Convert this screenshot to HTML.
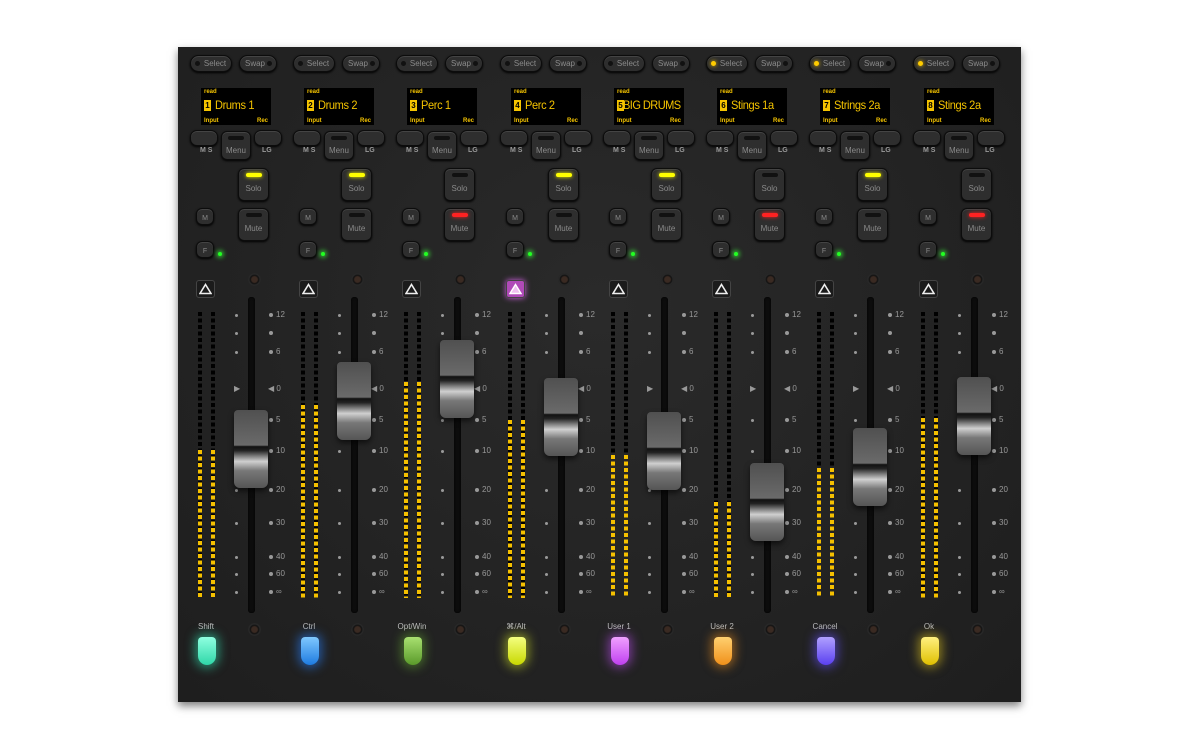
<!DOCTYPE html>
<html><head><meta charset="utf-8"><style>
*{margin:0;padding:0;box-sizing:border-box}
body{width:1200px;height:750px;background:#fff;position:relative;overflow:hidden;font-family:"Liberation Sans",sans-serif}
#panel{position:absolute;left:178px;top:47px;width:843px;height:655px;background:radial-gradient(ellipse at 50% 40%,#2a2a2a,#1e1e1e);box-shadow:0 4px 8px rgba(0,0,0,.5)}
.ch{position:absolute;top:0;width:103px;height:750px}
.ch>*{position:absolute}
.btn{background:#2e2e2e;border:1px solid #0c0c0c;border-radius:6px;box-shadow:inset 0 1px 0 #444,0 1px 2px #000;color:#8a8a8a;font-size:8px;text-align:center}
.sel{left:12px;top:55px;width:42px;height:17px;border-radius:9px;line-height:15px;padding-left:8px}
.swp{left:61px;top:55px;width:38px;height:17px;border-radius:9px;line-height:15px;padding-right:6px}
.dot{position:absolute;width:5px;height:5px;border-radius:50%;background:#111;top:5px}
.disp{left:23px;top:88px;width:70px;height:37px;background:#000;color:#f5c400;font-weight:bold}
.disp .r{position:absolute;left:3px;top:1px;font-size:6px}
.disp .n{position:absolute;left:3px;top:12px;width:7px;height:11px;background:#f5c400;color:#000;font-size:8px;line-height:11px;text-align:center}
.disp .nm{position:absolute;left:14px;top:10px;font-size:12px;white-space:nowrap;font-weight:normal;letter-spacing:-.4px;transform:scaleX(.92);transform-origin:left}
.disp .i{position:absolute;left:3px;bottom:1px;font-size:6px}
.disp .rc{position:absolute;right:3px;bottom:1px;font-size:6px}
.sb{top:130px;width:28px;height:16px;border-radius:7px}
.menu{left:43px;top:131px;width:30px;height:29px;line-height:30px;padding-top:4px}
.bar{position:absolute;left:50%;transform:translateX(-50%);width:16px;height:4px;border-radius:2px;background:#111;top:4px}
.lbl{font-size:7px;color:#999;font-weight:bold}
.sq{width:31px;height:33px;line-height:40px}
.sm{width:18px;height:17px;line-height:20px;font-size:7px}
.g{width:4px;height:4px;border-radius:50%;background:#2f2;box-shadow:0 0 4px 2px rgba(60,255,60,.6)}
.knob{width:13px;height:13px;border-radius:50%;background:radial-gradient(circle,#3a2a22 30%,#111 45%,#2a2a2a 60%,#151515 100%)}
.tri{left:18px;top:280px;width:19px;height:18px;background:#1b1b1b;border:1px solid #444;border-radius:3px}
.tri svg{position:absolute;left:2px;top:2px}
.track{left:70px;top:297px;width:7px;height:316px;background:#0c0c0c;border-radius:3px;box-shadow:inset 0 0 2px #000}
.mtr{top:312px;width:4px;height:286px;background:repeating-linear-gradient(#000 0 4px,transparent 4px 6.5px)}
.mtry{width:4px;background:repeating-linear-gradient(#f5c000 0 4px,transparent 4px 6.5px);bottom:152px}
.md{left:57px;width:3px;height:3px;border-radius:50%;background:#999}
.sd{left:91px;width:4px;height:4px;border-radius:50%;background:#999}
.sl{left:98px;font-size:8px;color:#999}
.cap{left:56px;width:34px;height:78px;border-radius:4px 4px 6px 6px;background:linear-gradient(#505050 0,#6a6a6a 45%,#111 47%,#222 52%,#888 60%,#d0d0d0 66%,#777 78%,#555 100%);box-shadow:0 3px 6px rgba(0,0,0,.6)}
.blab{top:622px;font-size:8px;color:#bbb;width:60px;text-align:center;left:-2px}
.led{left:20px;top:637px;width:18px;height:28px;border-radius:4px 4px 9px 9px}
</style></head><body>
<div id="panel"></div>

<div class="ch" style="left:178px">
<div class="btn sel"><span class="dot" style="left:4px"></span>Select</div><div class="btn swp">Swap<span class="dot" style="right:4px"></span></div>
<div class="disp"><span class="r">read</span><span class="n">1</span><span class="nm">Drums 1</span><span class="i">Input</span><span class="rc">Rec</span></div>
<div class="btn sb" style="left:12px"></div><div class="btn menu"><span class="bar"></span>Menu</div><div class="btn sb" style="left:76px"></div>
<div class="lbl" style="left:22px;top:147px">M S</div><div class="lbl" style="left:84px;top:147px">LG</div>
<div class="btn sq" style="left:60px;top:168px"><span class="bar" style="background:#ff0;box-shadow:0 0 4px #ff0"></span>Solo</div>
<div class="btn sm" style="left:18px;top:208px">M</div>
<div class="btn sq" style="left:60px;top:208px"><span class="bar"></span>Mute</div>
<div class="btn sm" style="left:18px;top:241px">F</div><div class="g" style="left:40px;top:252px"></div>
<div class="knob" style="left:70px;top:273px"></div>
<div class="tri"><svg width="13" height="12"><path d="M6.5 1.5 L12 10.5 L1 10.5Z" fill="none" stroke="#eee" stroke-width="1.6"/></svg></div>
<div class="mtr" style="left:20px"></div><div class="mtr" style="left:33px"></div>
<div class="mtry" style="left:20px;top:450px;bottom:auto;height:148px"></div><div class="mtry" style="left:33px;top:450px;bottom:auto;height:148px"></div>
<div class="track"></div>
<div class="sd" style="top:313px"></div><div class="sl" style="top:310px">12</div><div class="sd" style="top:331px"></div><div class="md" style="top:314px"></div><div class="md" style="top:332px"></div>
<div class="sd" style="top:350px"></div><div class="sl" style="top:347px">6</div><div class="md" style="top:351px"></div>
<div class="sl" style="top:384px;left:90px">◀ 0</div><div class="sl" style="top:384px;left:56px">▶</div>
<div class="sd" style="top:418px"></div><div class="sl" style="top:415px">5</div>
<div class="sd" style="top:449px"></div><div class="sl" style="top:446px">10</div>
<div class="sd" style="top:488px"></div><div class="sl" style="top:485px">20</div><div class="md" style="top:489px"></div>
<div class="sd" style="top:521px"></div><div class="sl" style="top:518px">30</div><div class="md" style="top:522px"></div>
<div class="sd" style="top:555px"></div><div class="sl" style="top:552px">40</div><div class="md" style="top:556px"></div>
<div class="sd" style="top:572px"></div><div class="sl" style="top:569px">60</div><div class="md" style="top:573px"></div>
<div class="sd" style="top:590px"></div><div class="sl" style="top:587px">∞</div><div class="md" style="top:591px"></div>
<div class="cap" style="top:410px"></div>
<div class="knob" style="left:70px;top:623px"></div>
<div class="blab">Shift</div>
<div class="led" style="background:linear-gradient(#8fffe0,#2fd7a8);box-shadow:0 0 10px 3px rgba(50,230,180,.55)"></div>
</div>

<div class="ch" style="left:281px">
<div class="btn sel"><span class="dot" style="left:4px"></span>Select</div><div class="btn swp">Swap<span class="dot" style="right:4px"></span></div>
<div class="disp"><span class="r">read</span><span class="n">2</span><span class="nm">Drums 2</span><span class="i">Input</span><span class="rc">Rec</span></div>
<div class="btn sb" style="left:12px"></div><div class="btn menu"><span class="bar"></span>Menu</div><div class="btn sb" style="left:76px"></div>
<div class="lbl" style="left:22px;top:147px">M S</div><div class="lbl" style="left:84px;top:147px">LG</div>
<div class="btn sq" style="left:60px;top:168px"><span class="bar" style="background:#ff0;box-shadow:0 0 4px #ff0"></span>Solo</div>
<div class="btn sm" style="left:18px;top:208px">M</div>
<div class="btn sq" style="left:60px;top:208px"><span class="bar"></span>Mute</div>
<div class="btn sm" style="left:18px;top:241px">F</div><div class="g" style="left:40px;top:252px"></div>
<div class="knob" style="left:70px;top:273px"></div>
<div class="tri"><svg width="13" height="12"><path d="M6.5 1.5 L12 10.5 L1 10.5Z" fill="none" stroke="#eee" stroke-width="1.6"/></svg></div>
<div class="mtr" style="left:20px"></div><div class="mtr" style="left:33px"></div>
<div class="mtry" style="left:20px;top:405px;bottom:auto;height:193px"></div><div class="mtry" style="left:33px;top:405px;bottom:auto;height:193px"></div>
<div class="track"></div>
<div class="sd" style="top:313px"></div><div class="sl" style="top:310px">12</div><div class="sd" style="top:331px"></div><div class="md" style="top:314px"></div><div class="md" style="top:332px"></div>
<div class="sd" style="top:350px"></div><div class="sl" style="top:347px">6</div><div class="md" style="top:351px"></div>
<div class="sl" style="top:384px;left:90px">◀ 0</div><div class="sl" style="top:384px;left:56px">▶</div>
<div class="sd" style="top:418px"></div><div class="sl" style="top:415px">5</div>
<div class="sd" style="top:449px"></div><div class="sl" style="top:446px">10</div><div class="md" style="top:450px"></div>
<div class="sd" style="top:488px"></div><div class="sl" style="top:485px">20</div><div class="md" style="top:489px"></div>
<div class="sd" style="top:521px"></div><div class="sl" style="top:518px">30</div><div class="md" style="top:522px"></div>
<div class="sd" style="top:555px"></div><div class="sl" style="top:552px">40</div><div class="md" style="top:556px"></div>
<div class="sd" style="top:572px"></div><div class="sl" style="top:569px">60</div><div class="md" style="top:573px"></div>
<div class="sd" style="top:590px"></div><div class="sl" style="top:587px">∞</div><div class="md" style="top:591px"></div>
<div class="cap" style="top:362px"></div>
<div class="knob" style="left:70px;top:623px"></div>
<div class="blab">Ctrl</div>
<div class="led" style="background:linear-gradient(#7fc8ff,#1e7be0);box-shadow:0 0 10px 3px rgba(40,130,255,.55)"></div>
</div>

<div class="ch" style="left:384px">
<div class="btn sel"><span class="dot" style="left:4px"></span>Select</div><div class="btn swp">Swap<span class="dot" style="right:4px"></span></div>
<div class="disp"><span class="r">read</span><span class="n">3</span><span class="nm">Perc 1</span><span class="i">Input</span><span class="rc">Rec</span></div>
<div class="btn sb" style="left:12px"></div><div class="btn menu"><span class="bar"></span>Menu</div><div class="btn sb" style="left:76px"></div>
<div class="lbl" style="left:22px;top:147px">M S</div><div class="lbl" style="left:84px;top:147px">LG</div>
<div class="btn sq" style="left:60px;top:168px"><span class="bar"></span>Solo</div>
<div class="btn sm" style="left:18px;top:208px">M</div>
<div class="btn sq" style="left:60px;top:208px"><span class="bar" style="background:#f22;box-shadow:0 0 4px #f22"></span>Mute</div>
<div class="btn sm" style="left:18px;top:241px">F</div><div class="g" style="left:40px;top:252px"></div>
<div class="knob" style="left:70px;top:273px"></div>
<div class="tri"><svg width="13" height="12"><path d="M6.5 1.5 L12 10.5 L1 10.5Z" fill="none" stroke="#eee" stroke-width="1.6"/></svg></div>
<div class="mtr" style="left:20px"></div><div class="mtr" style="left:33px"></div>
<div class="mtry" style="left:20px;top:382px;bottom:auto;height:216px"></div><div class="mtry" style="left:33px;top:382px;bottom:auto;height:216px"></div>
<div class="track"></div>
<div class="sd" style="top:313px"></div><div class="sl" style="top:310px">12</div><div class="sd" style="top:331px"></div><div class="md" style="top:314px"></div><div class="md" style="top:332px"></div>
<div class="sd" style="top:350px"></div><div class="sl" style="top:347px">6</div><div class="md" style="top:351px"></div>
<div class="sl" style="top:384px;left:90px">◀ 0</div>
<div class="sd" style="top:418px"></div><div class="sl" style="top:415px">5</div><div class="md" style="top:419px"></div>
<div class="sd" style="top:449px"></div><div class="sl" style="top:446px">10</div><div class="md" style="top:450px"></div>
<div class="sd" style="top:488px"></div><div class="sl" style="top:485px">20</div><div class="md" style="top:489px"></div>
<div class="sd" style="top:521px"></div><div class="sl" style="top:518px">30</div><div class="md" style="top:522px"></div>
<div class="sd" style="top:555px"></div><div class="sl" style="top:552px">40</div><div class="md" style="top:556px"></div>
<div class="sd" style="top:572px"></div><div class="sl" style="top:569px">60</div><div class="md" style="top:573px"></div>
<div class="sd" style="top:590px"></div><div class="sl" style="top:587px">∞</div><div class="md" style="top:591px"></div>
<div class="cap" style="top:340px"></div>
<div class="knob" style="left:70px;top:623px"></div>
<div class="blab">Opt/Win</div>
<div class="led" style="background:linear-gradient(#a8e070,#5a9a2a);box-shadow:0 0 10px 3px rgba(110,190,50,.45)"></div>
</div>

<div class="ch" style="left:488px">
<div class="btn sel"><span class="dot" style="left:4px"></span>Select</div><div class="btn swp">Swap<span class="dot" style="right:4px"></span></div>
<div class="disp"><span class="r">read</span><span class="n">4</span><span class="nm">Perc 2</span><span class="i">Input</span><span class="rc">Rec</span></div>
<div class="btn sb" style="left:12px"></div><div class="btn menu"><span class="bar"></span>Menu</div><div class="btn sb" style="left:76px"></div>
<div class="lbl" style="left:22px;top:147px">M S</div><div class="lbl" style="left:84px;top:147px">LG</div>
<div class="btn sq" style="left:60px;top:168px"><span class="bar" style="background:#ff0;box-shadow:0 0 4px #ff0"></span>Solo</div>
<div class="btn sm" style="left:18px;top:208px">M</div>
<div class="btn sq" style="left:60px;top:208px"><span class="bar"></span>Mute</div>
<div class="btn sm" style="left:18px;top:241px">F</div><div class="g" style="left:40px;top:252px"></div>
<div class="knob" style="left:70px;top:273px"></div>
<div class="tri" style="background:#b04ab8;box-shadow:0 0 6px #d060e0"><svg width="13" height="12"><path d="M6.5 1.5 L12 10.5 L1 10.5Z" fill="#f0c0f0" stroke="#fff" stroke-width="1.4"/></svg></div>
<div class="mtr" style="left:20px"></div><div class="mtr" style="left:33px"></div>
<div class="mtry" style="left:20px;top:420px;bottom:auto;height:178px"></div><div class="mtry" style="left:33px;top:420px;bottom:auto;height:178px"></div>
<div class="track"></div>
<div class="sd" style="top:313px"></div><div class="sl" style="top:310px">12</div><div class="sd" style="top:331px"></div><div class="md" style="top:314px"></div><div class="md" style="top:332px"></div>
<div class="sd" style="top:350px"></div><div class="sl" style="top:347px">6</div><div class="md" style="top:351px"></div>
<div class="sl" style="top:384px;left:90px">◀ 0</div>
<div class="sd" style="top:418px"></div><div class="sl" style="top:415px">5</div>
<div class="sd" style="top:449px"></div><div class="sl" style="top:446px">10</div>
<div class="sd" style="top:488px"></div><div class="sl" style="top:485px">20</div><div class="md" style="top:489px"></div>
<div class="sd" style="top:521px"></div><div class="sl" style="top:518px">30</div><div class="md" style="top:522px"></div>
<div class="sd" style="top:555px"></div><div class="sl" style="top:552px">40</div><div class="md" style="top:556px"></div>
<div class="sd" style="top:572px"></div><div class="sl" style="top:569px">60</div><div class="md" style="top:573px"></div>
<div class="sd" style="top:590px"></div><div class="sl" style="top:587px">∞</div><div class="md" style="top:591px"></div>
<div class="cap" style="top:378px"></div>
<div class="knob" style="left:70px;top:623px"></div>
<div class="blab">⌘/Alt</div>
<div class="led" style="background:linear-gradient(#f4ff80,#c8d800);box-shadow:0 0 10px 3px rgba(220,240,40,.5)"></div>
</div>

<div class="ch" style="left:591px">
<div class="btn sel"><span class="dot" style="left:4px"></span>Select</div><div class="btn swp">Swap<span class="dot" style="right:4px"></span></div>
<div class="disp"><span class="r">read</span><span class="n">5</span><span class="nm" style="left:9px;letter-spacing:-.6px">BIG DRUMS</span><span class="i">Input</span><span class="rc">Rec</span></div>
<div class="btn sb" style="left:12px"></div><div class="btn menu"><span class="bar"></span>Menu</div><div class="btn sb" style="left:76px"></div>
<div class="lbl" style="left:22px;top:147px">M S</div><div class="lbl" style="left:84px;top:147px">LG</div>
<div class="btn sq" style="left:60px;top:168px"><span class="bar" style="background:#ff0;box-shadow:0 0 4px #ff0"></span>Solo</div>
<div class="btn sm" style="left:18px;top:208px">M</div>
<div class="btn sq" style="left:60px;top:208px"><span class="bar"></span>Mute</div>
<div class="btn sm" style="left:18px;top:241px">F</div><div class="g" style="left:40px;top:252px"></div>
<div class="knob" style="left:70px;top:273px"></div>
<div class="tri"><svg width="13" height="12"><path d="M6.5 1.5 L12 10.5 L1 10.5Z" fill="none" stroke="#eee" stroke-width="1.6"/></svg></div>
<div class="mtr" style="left:20px"></div><div class="mtr" style="left:33px"></div>
<div class="mtry" style="left:20px;top:455px;bottom:auto;height:143px"></div><div class="mtry" style="left:33px;top:455px;bottom:auto;height:143px"></div>
<div class="track"></div>
<div class="sd" style="top:313px"></div><div class="sl" style="top:310px">12</div><div class="sd" style="top:331px"></div><div class="md" style="top:314px"></div><div class="md" style="top:332px"></div>
<div class="sd" style="top:350px"></div><div class="sl" style="top:347px">6</div><div class="md" style="top:351px"></div>
<div class="sl" style="top:384px;left:90px">◀ 0</div><div class="sl" style="top:384px;left:56px">▶</div>
<div class="sd" style="top:418px"></div><div class="sl" style="top:415px">5</div>
<div class="sd" style="top:449px"></div><div class="sl" style="top:446px">10</div>
<div class="sd" style="top:488px"></div><div class="sl" style="top:485px">20</div><div class="md" style="top:489px"></div>
<div class="sd" style="top:521px"></div><div class="sl" style="top:518px">30</div><div class="md" style="top:522px"></div>
<div class="sd" style="top:555px"></div><div class="sl" style="top:552px">40</div><div class="md" style="top:556px"></div>
<div class="sd" style="top:572px"></div><div class="sl" style="top:569px">60</div><div class="md" style="top:573px"></div>
<div class="sd" style="top:590px"></div><div class="sl" style="top:587px">∞</div><div class="md" style="top:591px"></div>
<div class="cap" style="top:412px"></div>
<div class="knob" style="left:70px;top:623px"></div>
<div class="blab">User 1</div>
<div class="led" style="background:linear-gradient(#f0a0ff,#c040f0);box-shadow:0 0 10px 3px rgba(200,80,255,.5)"></div>
</div>

<div class="ch" style="left:694px">
<div class="btn sel"><span class="dot" style="left:4px;background:#fc0;box-shadow:0 0 4px #fc0"></span>Select</div><div class="btn swp">Swap<span class="dot" style="right:4px"></span></div>
<div class="disp"><span class="r">read</span><span class="n">6</span><span class="nm">Stings 1a</span><span class="i">Input</span><span class="rc">Rec</span></div>
<div class="btn sb" style="left:12px"></div><div class="btn menu"><span class="bar"></span>Menu</div><div class="btn sb" style="left:76px"></div>
<div class="lbl" style="left:22px;top:147px">M S</div><div class="lbl" style="left:84px;top:147px">LG</div>
<div class="btn sq" style="left:60px;top:168px"><span class="bar"></span>Solo</div>
<div class="btn sm" style="left:18px;top:208px">M</div>
<div class="btn sq" style="left:60px;top:208px"><span class="bar" style="background:#f22;box-shadow:0 0 4px #f22"></span>Mute</div>
<div class="btn sm" style="left:18px;top:241px">F</div><div class="g" style="left:40px;top:252px"></div>
<div class="knob" style="left:70px;top:273px"></div>
<div class="tri"><svg width="13" height="12"><path d="M6.5 1.5 L12 10.5 L1 10.5Z" fill="none" stroke="#eee" stroke-width="1.6"/></svg></div>
<div class="mtr" style="left:20px"></div><div class="mtr" style="left:33px"></div>
<div class="mtry" style="left:20px;top:502px;bottom:auto;height:96px"></div><div class="mtry" style="left:33px;top:502px;bottom:auto;height:96px"></div>
<div class="track"></div>
<div class="sd" style="top:313px"></div><div class="sl" style="top:310px">12</div><div class="sd" style="top:331px"></div><div class="md" style="top:314px"></div><div class="md" style="top:332px"></div>
<div class="sd" style="top:350px"></div><div class="sl" style="top:347px">6</div><div class="md" style="top:351px"></div>
<div class="sl" style="top:384px;left:90px">◀ 0</div><div class="sl" style="top:384px;left:56px">▶</div>
<div class="sd" style="top:418px"></div><div class="sl" style="top:415px">5</div><div class="md" style="top:419px"></div>
<div class="sd" style="top:449px"></div><div class="sl" style="top:446px">10</div><div class="md" style="top:450px"></div>
<div class="sd" style="top:488px"></div><div class="sl" style="top:485px">20</div>
<div class="sd" style="top:521px"></div><div class="sl" style="top:518px">30</div>
<div class="sd" style="top:555px"></div><div class="sl" style="top:552px">40</div><div class="md" style="top:556px"></div>
<div class="sd" style="top:572px"></div><div class="sl" style="top:569px">60</div><div class="md" style="top:573px"></div>
<div class="sd" style="top:590px"></div><div class="sl" style="top:587px">∞</div><div class="md" style="top:591px"></div>
<div class="cap" style="top:463px"></div>
<div class="knob" style="left:70px;top:623px"></div>
<div class="blab">User 2</div>
<div class="led" style="background:linear-gradient(#ffd070,#f0901a);box-shadow:0 0 10px 3px rgba(250,150,30,.5)"></div>
</div>

<div class="ch" style="left:797px">
<div class="btn sel"><span class="dot" style="left:4px;background:#fc0;box-shadow:0 0 4px #fc0"></span>Select</div><div class="btn swp">Swap<span class="dot" style="right:4px"></span></div>
<div class="disp"><span class="r">read</span><span class="n">7</span><span class="nm">Strings 2a</span><span class="i">Input</span><span class="rc">Rec</span></div>
<div class="btn sb" style="left:12px"></div><div class="btn menu"><span class="bar"></span>Menu</div><div class="btn sb" style="left:76px"></div>
<div class="lbl" style="left:22px;top:147px">M S</div><div class="lbl" style="left:84px;top:147px">LG</div>
<div class="btn sq" style="left:60px;top:168px"><span class="bar" style="background:#ff0;box-shadow:0 0 4px #ff0"></span>Solo</div>
<div class="btn sm" style="left:18px;top:208px">M</div>
<div class="btn sq" style="left:60px;top:208px"><span class="bar"></span>Mute</div>
<div class="btn sm" style="left:18px;top:241px">F</div><div class="g" style="left:40px;top:252px"></div>
<div class="knob" style="left:70px;top:273px"></div>
<div class="tri"><svg width="13" height="12"><path d="M6.5 1.5 L12 10.5 L1 10.5Z" fill="none" stroke="#eee" stroke-width="1.6"/></svg></div>
<div class="mtr" style="left:20px"></div><div class="mtr" style="left:33px"></div>
<div class="mtry" style="left:20px;top:468px;bottom:auto;height:130px"></div><div class="mtry" style="left:33px;top:468px;bottom:auto;height:130px"></div>
<div class="track"></div>
<div class="sd" style="top:313px"></div><div class="sl" style="top:310px">12</div><div class="sd" style="top:331px"></div><div class="md" style="top:314px"></div><div class="md" style="top:332px"></div>
<div class="sd" style="top:350px"></div><div class="sl" style="top:347px">6</div><div class="md" style="top:351px"></div>
<div class="sl" style="top:384px;left:90px">◀ 0</div><div class="sl" style="top:384px;left:56px">▶</div>
<div class="sd" style="top:418px"></div><div class="sl" style="top:415px">5</div><div class="md" style="top:419px"></div>
<div class="sd" style="top:449px"></div><div class="sl" style="top:446px">10</div>
<div class="sd" style="top:488px"></div><div class="sl" style="top:485px">20</div>
<div class="sd" style="top:521px"></div><div class="sl" style="top:518px">30</div><div class="md" style="top:522px"></div>
<div class="sd" style="top:555px"></div><div class="sl" style="top:552px">40</div><div class="md" style="top:556px"></div>
<div class="sd" style="top:572px"></div><div class="sl" style="top:569px">60</div><div class="md" style="top:573px"></div>
<div class="sd" style="top:590px"></div><div class="sl" style="top:587px">∞</div><div class="md" style="top:591px"></div>
<div class="cap" style="top:428px"></div>
<div class="knob" style="left:70px;top:623px"></div>
<div class="blab">Cancel</div>
<div class="led" style="background:linear-gradient(#b0a0ff,#5a40f0);box-shadow:0 0 10px 3px rgba(100,80,255,.55)"></div>
</div>

<div class="ch" style="left:901px">
<div class="btn sel"><span class="dot" style="left:4px;background:#fc0;box-shadow:0 0 4px #fc0"></span>Select</div><div class="btn swp">Swap<span class="dot" style="right:4px"></span></div>
<div class="disp"><span class="r">read</span><span class="n">8</span><span class="nm">Stings 2a</span><span class="i">Input</span><span class="rc">Rec</span></div>
<div class="btn sb" style="left:12px"></div><div class="btn menu"><span class="bar"></span>Menu</div><div class="btn sb" style="left:76px"></div>
<div class="lbl" style="left:22px;top:147px">M S</div><div class="lbl" style="left:84px;top:147px">LG</div>
<div class="btn sq" style="left:60px;top:168px"><span class="bar"></span>Solo</div>
<div class="btn sm" style="left:18px;top:208px">M</div>
<div class="btn sq" style="left:60px;top:208px"><span class="bar" style="background:#f22;box-shadow:0 0 4px #f22"></span>Mute</div>
<div class="btn sm" style="left:18px;top:241px">F</div><div class="g" style="left:40px;top:252px"></div>
<div class="knob" style="left:70px;top:273px"></div>
<div class="tri"><svg width="13" height="12"><path d="M6.5 1.5 L12 10.5 L1 10.5Z" fill="none" stroke="#eee" stroke-width="1.6"/></svg></div>
<div class="mtr" style="left:20px"></div><div class="mtr" style="left:33px"></div>
<div class="mtry" style="left:20px;top:418px;bottom:auto;height:180px"></div><div class="mtry" style="left:33px;top:418px;bottom:auto;height:180px"></div>
<div class="track"></div>
<div class="sd" style="top:313px"></div><div class="sl" style="top:310px">12</div><div class="sd" style="top:331px"></div><div class="md" style="top:314px"></div><div class="md" style="top:332px"></div>
<div class="sd" style="top:350px"></div><div class="sl" style="top:347px">6</div><div class="md" style="top:351px"></div>
<div class="sl" style="top:384px;left:90px">◀ 0</div>
<div class="sd" style="top:418px"></div><div class="sl" style="top:415px">5</div>
<div class="sd" style="top:449px"></div><div class="sl" style="top:446px">10</div>
<div class="sd" style="top:488px"></div><div class="sl" style="top:485px">20</div><div class="md" style="top:489px"></div>
<div class="sd" style="top:521px"></div><div class="sl" style="top:518px">30</div><div class="md" style="top:522px"></div>
<div class="sd" style="top:555px"></div><div class="sl" style="top:552px">40</div><div class="md" style="top:556px"></div>
<div class="sd" style="top:572px"></div><div class="sl" style="top:569px">60</div><div class="md" style="top:573px"></div>
<div class="sd" style="top:590px"></div><div class="sl" style="top:587px">∞</div><div class="md" style="top:591px"></div>
<div class="cap" style="top:377px"></div>
<div class="knob" style="left:70px;top:623px"></div>
<div class="blab">Ok</div>
<div class="led" style="background:linear-gradient(#fff080,#e0c000);box-shadow:0 0 10px 3px rgba(240,210,30,.5)"></div>
</div>
</body></html>
